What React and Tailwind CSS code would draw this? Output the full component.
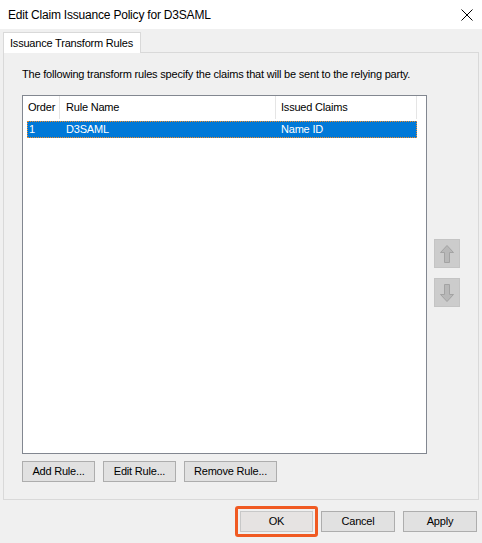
import React from "react";

const font = { fontFamily: '"Segoe UI", "Liberation Sans", Arial, sans-serif' };

function Btn({ children, className = "" }) {
  return (
    <div
      className={`h-[21px] border border-[#adadad] bg-[#e1e1e1] flex items-center justify-center text-[11px] tracking-[-0.2px] text-black ${className}`}
    >
      {children}
    </div>
  );
}

function ArrowBtn({ down }) {
  return (
    <div className="w-[26px] h-[29px] bg-[#cccccc] border border-[#c4c4c4] flex items-center justify-center">
      <svg width="16" height="20" viewBox="0 0 16 20" className={down ? "rotate-180" : ""}>
        <path
          d="M8 1.5 L14.5 8.5 L10.5 8.5 L10.5 18.5 L5.5 18.5 L5.5 8.5 L1.5 8.5 Z"
          fill="#b8b8b8"
          stroke="#a3a3a3"
          strokeWidth="1"
          strokeLinejoin="round"
        />
      </svg>
    </div>
  );
}

export default function App() {
  return (
    <div className="w-[482px] h-[543px] bg-[#f0f0f0] flex flex-col text-black text-[11px] tracking-[-0.2px]" style={font}>
      {/* title bar */}
      <div className="h-[29px] bg-white flex items-center justify-between pl-[8px] pr-[8px]">
        <span className="text-[12px] tracking-[-0.2px]">Edit Claim Issuance Policy for D3SAML</span>
        <svg width="12" height="12" viewBox="0 0 12 12" className="mr-[1px]">
          <path d="M0.5 0.5 L11.5 11.5 M11.5 0.5 L0.5 11.5" stroke="#000" strokeWidth="1" />
        </svg>
      </div>

      {/* tab strip */}
      <div className="pl-[3px] pt-[3px] flex">
        <div className="h-[21px] w-[138px] bg-white border border-b-0 border-[#d9d9d9] flex items-center pl-[6px] whitespace-nowrap relative z-10 -mb-px">
          Issuance Transform Rules
        </div>
      </div>

      {/* tab page */}
      <div className="ml-[3px] w-[476px] h-[448px] border border-[#d9d9d9] bg-[#f0f0f0] flex flex-col pl-[18px]">
        <div className="pt-[13px] leading-[16px] whitespace-nowrap">
          The following transform rules specify the claims that will be sent to the relying party.
        </div>

        <div className="flex mt-[13px]">
          {/* list view */}
          <div className="w-[405px] h-[359px] border border-[#828790] bg-white flex flex-col">
            <div className="flex h-[23px]">
              <div className="w-[37px] border-r border-[#e5e5e5] pl-[5px] flex items-center">Order</div>
              <div className="w-[216px] border-r border-[#e5e5e5] pl-[6px] flex items-center">Rule Name</div>
              <div className="w-[141px] border-r border-[#e5e5e5] pl-[5px] flex items-center">Issued Claims</div>
            </div>
            <div className="mt-[2px] ml-[4px] w-[390px] h-[17px] bg-[#0078d7] border border-dotted border-[#f28c28] flex items-center text-white">
              <div className="w-[38px] pl-[1px]">1</div>
              <div className="w-[215px]">D3SAML</div>
              <div>Name ID</div>
            </div>
          </div>

          <div className="ml-[7px] pt-[144px] flex flex-col gap-[10px]">
            <ArrowBtn />
            <ArrowBtn down />
          </div>
        </div>

        <div className="flex gap-[8px] mt-[7px]">
          <Btn className="w-[73px]">Add Rule...</Btn>
          <Btn className="w-[73px]">Edit Rule...</Btn>
          <Btn className="w-[93px]">Remove Rule...</Btn>
        </div>
      </div>

      {/* dialog buttons */}
      <div className="flex justify-end pr-[5px] pt-[11px]">
        <div className="rounded-[3px] border-[3px] border-[#f05a22] p-[2px] -mt-[5px] mr-[3px] h-[31px]">
          <div className="h-[21px] w-[73px] border border-[#c8c8c8] bg-[#e6e3e2] flex items-center justify-center">
            OK
          </div>
        </div>
        <Btn className="mr-[8px] w-[74px]">Cancel</Btn>
        <Btn className="w-[74px]">Apply</Btn>
      </div>
    </div>
  );
}
